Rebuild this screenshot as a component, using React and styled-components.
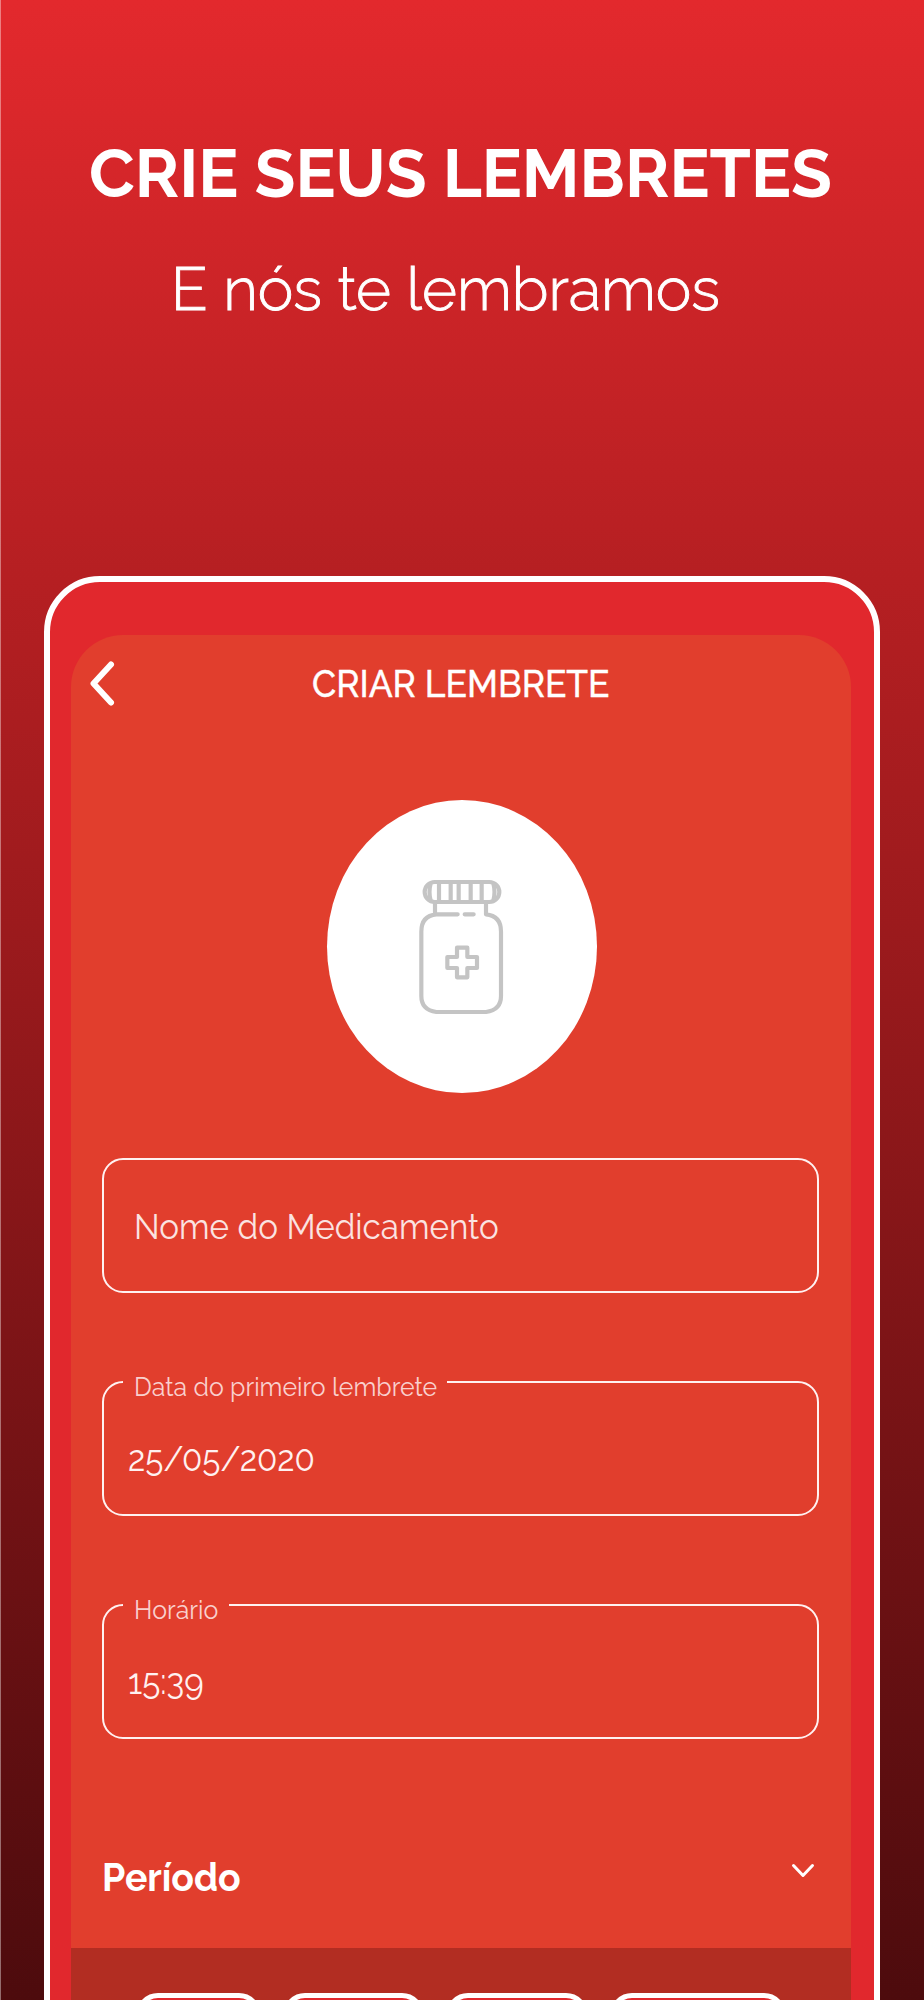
import React from "react";
import styled, { createGlobalStyle } from "styled-components";

const colors = {
  frame: "#e1282d",
  screen: "#e13e2d",
  panel: "#b22d22",
  line: "#fff1f1",
  icon: "#c4c4c4",
}

const GlobalStyle = createGlobalStyle`
  * {
    box-sizing: border-box;
  }

  body {
    margin: 0;
    font-family: Raleway, Lato, "Open Sans", sans-serif;
    color: #fff;
  }
`

const Page = styled.main`
  width: 924px;
  height: 2000px;
  overflow: hidden;
  display: flex;
  flex-direction: column;
  border-left: 1px solid rgba(255, 255, 255, 0.4);
  background: linear-gradient(180deg, #e3292d 0%, #b51f22 29%, #4d0b0d 100%);
`

const Heading = styled.header`
  height: 576px;
  flex-shrink: 0;
  padding-top: 134px;
`

const Text = styled.div`
  margin: 0;
  white-space: nowrap;
  font-size: ${(props) => props.$size}px;
  line-height: ${(props) => props.$line}px;
  font-weight: ${(props) => props.$weight || 400};
`

const Title = styled(Text)`
  padding-left: 88px;
`

const Subtitle = styled(Text)`
  padding-left: 170px;
  margin-top: 35px;
  -webkit-text-stroke: 0.9px #fff;
`

const Phone = styled.section`
  flex-shrink: 0;
  width: 836px;
  height: 1500px;
  margin-left: 43px;
  padding: 53px 23px 0 21px;
  border: 6px solid #fff;
  border-radius: 56px;
  background: ${colors.frame};
`

const Screen = styled.div`
  height: 1440px;
  border-radius: 52px 52px 0 0;
  background: ${colors.screen};
`

const ScreenText = styled(Text)`
  transform: scaleX(${(props) => props.$squeeze || 0.922});
  transform-origin: 0 0;
`

const TopBar = styled.div`
  height: 165px;
  display: flex;
  align-items: flex-start;
  padding: 24px 0 0 15px;
`

const ScreenTitle = styled(ScreenText)`
  margin: 1px 0 0 196px;
  -webkit-text-stroke: 0.4px #fff;
`

const Avatar = styled.div`
  width: 270px;
  height: 293px;
  margin: 0 0 0 256px;
  border-radius: 50%;
  background: #fff;
  display: flex;
  align-items: center;
  justify-content: center;
  padding: 0 4px 4px 0;
`

const Form = styled.div`
  display: flex;
  flex-direction: column;
  gap: 88px;
  padding: 65px 32px 0 31px;
`

const Field = styled.fieldset`
  height: 135px;
  min-width: 0;
  margin: 0;
  padding: 0;
  border: 2px solid ${colors.line};
  border-radius: 21px;
`

const Placeholder = styled(ScreenText)`
  margin: 45px 0 0 29.5px;
  color: #fbe3e1;
`

const Label = styled.legend`
  height: 2px;
  width: ${(props) => props.$width}px;
  margin-left: 19px;
  padding-left: 10.5px;
`

const LabelText = styled(ScreenText)`
  color: #f9d0cd;
  margin-top: -9px;
`

const Value = styled(ScreenText)`
  margin: 54px 0 0 23.5px;
  color: #fff1f0;
`

const Period = styled.div`
  height: 209px;
  display: flex;
  justify-content: space-between;
  padding: 115px 36px 0 31px;
`

const Panel = styled.div`
  height: 200px;
  display: flex;
  gap: 22px;
  padding: 45px 0 0 65px;
  background: ${colors.panel};
`

const Chip = styled.div`
  width: ${(props) => props.$width}px;
  height: 70px;
  border: 5px solid #fff;
  border-radius: 22px;
  background: ${colors.frame};
`

const ChevronBox = styled.div`
  padding-top: 8px;
`

function BackIcon() {
  return (
    <svg width="30" height="50" viewBox="0 0 30 50" fill="none">
      <path d="M25 5.5 7.5 24.5l17.5 19" stroke="#fff" strokeWidth="6" strokeLinecap="round" strokeLinejoin="round" />
    </svg>
  )
}

function ChevronIcon() {
  return (
    <svg width="24" height="18" viewBox="0 0 24 18" fill="none">
      <path d="M2.5 3.5 12 13.5l9.5-10" stroke="#fff" strokeWidth="3" strokeLinecap="round" strokeLinejoin="round" />
    </svg>
  )
}

function BottleIcon() {
  return (
    <svg
      width="120"
      height="170"
      viewBox="0 0 360 510"
      fill="none"
      stroke={colors.icon}
      strokeWidth="12.5"
      strokeLinecap="round"
      strokeLinejoin="round"
    >
      <rect x="74" y="66" width="224" height="60" rx="30" />
      <path d="M117 66v60M152 66v60M176 66v60M212 66v60M245 66v60M92 70q-7 27 0 52M280 70q7 27 0 52" strokeLinecap="butt" />
      <path d="M105 128v35M258 128v35q45 4 45 52v193q0 42-45 48H109q-45-6-45-48V215q0-48 45-52h64M194 163h27" />
      <path d="M171 263h31v28h29v33h-29v28h-31v-28h-29v-33h29z" />
    </svg>
  )
}

const chips = [125, 141, 142, 176]

export default function App() {
  return (
    <>
      <GlobalStyle />
      <Page>
        <Heading>
          <Title as="h1" $size={66.8} $line={80} $weight={700}>CRIE SEUS LEMBRETES</Title>
          <Subtitle $size={60} $line={80} $weight={300}>E nós te lembramos</Subtitle>
        </Heading>
        <Phone>
          <Screen>
            <TopBar>
              <BackIcon />
              <ScreenTitle $size={38} $line={48} $weight={500} $squeeze={0.932}>CRIAR LEMBRETE</ScreenTitle>
            </TopBar>
            <Avatar>
              <BottleIcon />
            </Avatar>
            <Form>
              <Field>
                <Placeholder $size={36} $line={42}>Nome do Medicamento</Placeholder>
              </Field>
              <Field>
                <Label $width={324}>
                  <LabelText $size={27} $line={30}>Data do primeiro lembrete</LabelText>
                </Label>
                <Value $size={36} $line={42}>25/05/2020</Value>
              </Field>
              <Field>
                <Label $width={106}>
                  <LabelText $size={27} $line={30}>Horário</LabelText>
                </Label>
                <Value $size={36} $line={42}>15:39</Value>
              </Field>
            </Form>
            <Period>
              <ScreenText $size={40} $line={46} $weight={700} $squeeze={0.935}>Período</ScreenText>
              <ChevronBox>
                <ChevronIcon />
              </ChevronBox>
            </Period>
            <Panel>
              {chips.map((width) => (
                <Chip key={width} $width={width} />
              ))}
            </Panel>
          </Screen>
        </Phone>
      </Page>
    </>
  )
}
